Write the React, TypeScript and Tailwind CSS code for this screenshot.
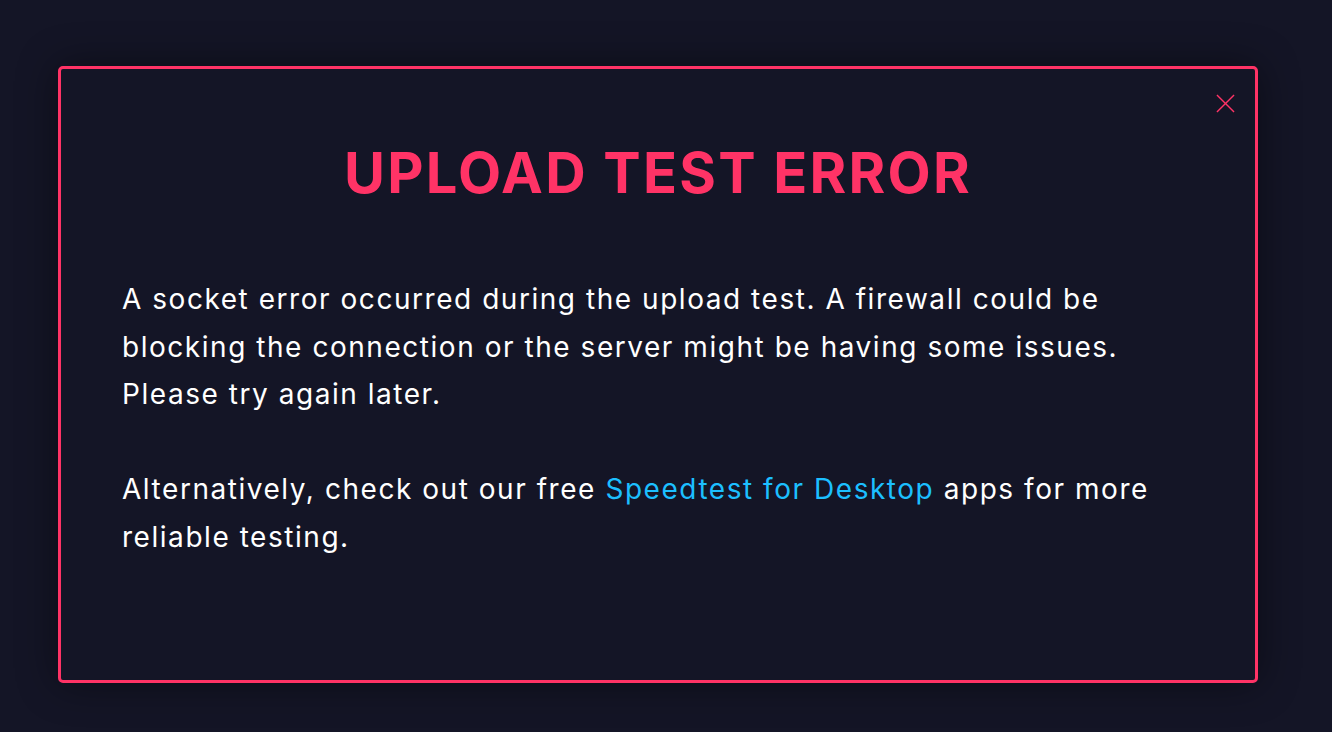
import React from 'react';

const CloseIcon = () => (
  <svg width="19" height="19" viewBox="0 0 20 20" fill="none" stroke="#ff3366" strokeWidth={1.5}>
    <path d="M1 1L19 19M19 1L1 19" />
  </svg>
);

export default function App() {
  return (
    <div
      className="w-full h-[732px] bg-[#141526] pt-[66px] px-[58px] overflow-hidden"
      style={{ fontFamily: 'Inter, "Noto Sans", sans-serif' }}
    >
      <div className="relative h-[617px] w-[1200px] rounded-[5px] border-[3px] border-[#ff3366] bg-[#141526] shadow-[0_0_40px_rgba(0,0,0,0.45)]">
        <button className="absolute right-[20px] top-[25px] p-0">
          <CloseIcon />
        </button>
        <h1 className="pt-[74px] text-center text-[56px] font-bold leading-[60px] tracking-[0.04em] text-[#ff3366]">
          UPLOAD TEST ERROR
        </h1>
        <div className="mt-[73px] px-[61px] text-[28px] leading-[47.5px] tracking-[0.055em] text-white">
          <p className="max-w-[1060px]">
            A socket error occurred during the upload test. A firewall could be blocking the connection or the server
            might be having some issues. Please try again later.
          </p>
          <p className="mt-[47.5px] max-w-[1060px]">
            Alternatively, check out our free{' '}
            <a href="#" className="text-[#1cbfff]">
              Speedtest for Desktop
            </a>{' '}
            apps for more reliable testing.
          </p>
        </div>
      </div>
    </div>
  );
}
